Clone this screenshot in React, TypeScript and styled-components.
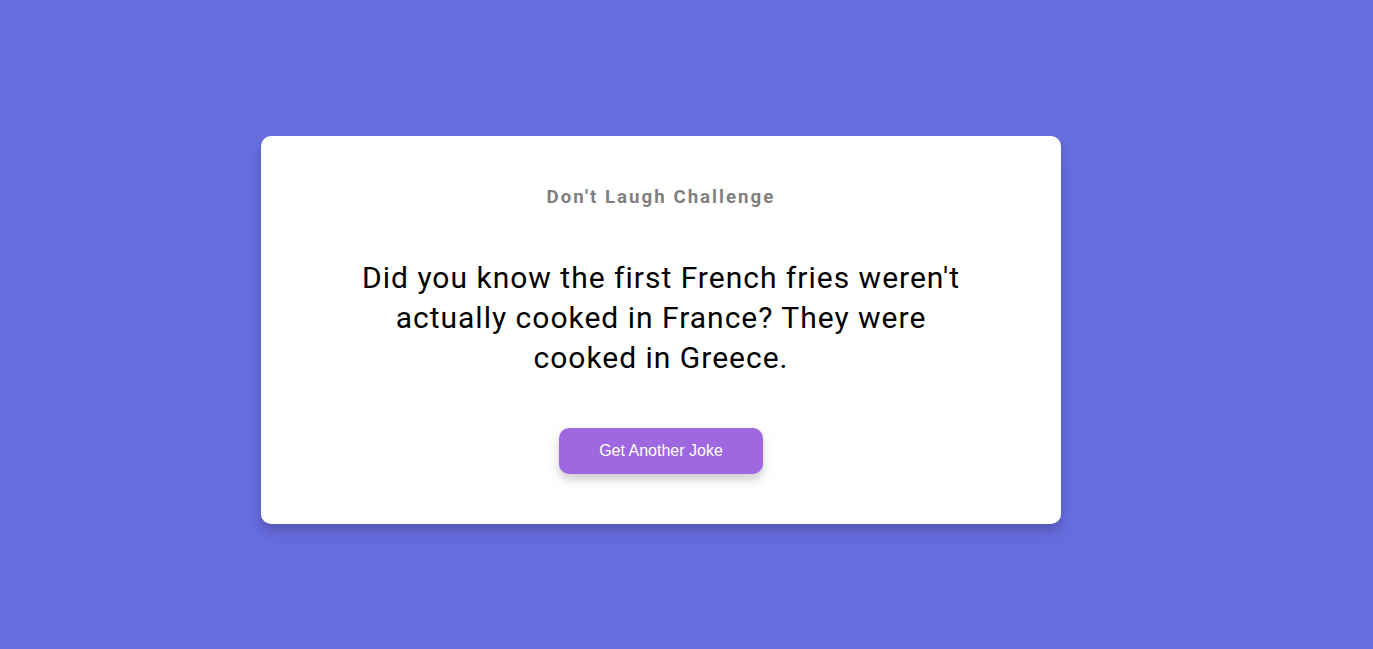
import React from "react";
import styled, { createGlobalStyle } from "styled-components";

const Global = createGlobalStyle`
  * { box-sizing: border-box; }
  html, body { margin: 0; padding: 0; }
  body {
    background-color: #686de0;
    font-family: Roboto, "Liberation Sans", sans-serif;
    overflow: hidden;
  }
`;

const Page = styled.main`
  height: 100vh;
  display: flex;
  flex-direction: column;
  align-items: center;
  justify-content: center;
  padding: 10px 51px 0 0;
`;

const Card = styled.section`
  background-color: #fff;
  border-radius: 10px;
  box-shadow: 0 10px 20px rgba(0, 0, 0, 0.1), 0 6px 6px rgba(0, 0, 0, 0.1);
  padding: 50px 20px;
  text-align: center;
  width: 800px;
  max-width: 100%;
`;

const Title = styled.h3`
  margin: 0;
  font-size: 18.72px;
  font-weight: 700;
  opacity: 0.5;
  letter-spacing: 2px;
  color: #000;
`;

const Joke = styled.div`
  font-size: 30px;
  letter-spacing: 1px;
  line-height: 40px;
  margin: 50px auto;
  max-width: 600px;
  color: #000;
`;

const Button = styled.button`
  background-color: #9f68e0;
  color: #fff;
  border: 0;
  border-radius: 10px;
  box-shadow: 0 5px 15px rgba(0, 0, 0, 0.1), 0 6px 6px rgba(0, 0, 0, 0.1);
  padding: 14px 40px;
  font-family: "Liberation Sans", Arial, sans-serif;
  font-size: 16px;
  line-height: 18px;
  cursor: pointer;
`;

export default function App() {
  return (
    <>
      <Global />
      <Page>
        <Card>
          <Title>Don't Laugh Challenge</Title>
          <Joke>
            Did you know the first French fries weren't actually cooked in France? They were cooked in Greece.
          </Joke>
          <Button>Get Another Joke</Button>
        </Card>
      </Page>
    </>
  );
}
